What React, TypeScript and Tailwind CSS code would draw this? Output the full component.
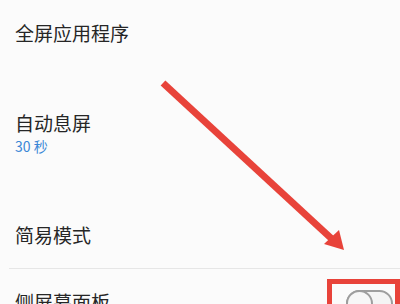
import React from "react";

export default function App() {
  return (
    <div
      className="relative w-[400px] h-[304px] overflow-hidden bg-[#fbfbfb]"
      style={{ fontFamily: '"Noto Sans CJK SC", "Noto Sans", sans-serif' }}
    >
      <div className="flex flex-col">
        <div className="h-[66px] flex items-center pl-[15px]">
          <span className="text-[19px] leading-[24px] text-[#262626]">全屏应用程序</span>
        </div>
        <div className="flex flex-col pl-[15px] pt-[45px]">
          <span className="text-[19px] leading-[24px] text-[#262626]">自动息屏</span>
          <span className="mt-[3px] text-[14px] leading-[17px] text-[#3a87d6]">30 秒</span>
        </div>
        <div className="pl-[15px] pt-[68px] pb-[20px]">
          <span className="text-[19px] leading-[24px] text-[#262626]">简易模式</span>
        </div>
        <div className="ml-[9px] h-px bg-[#e6e6e6]" />
        <div className="flex items-start justify-between pl-[15px] pr-[7px] pt-[21px]">
          <span className="text-[19px] leading-[24px] text-[#262626] whitespace-nowrap">侧屏幕面板</span>
          <div className="relative w-[47px] h-[27px] rounded-full border-2 border-[#9e9e9e] bg-[#f4f4f4]">
            <div className="absolute left-[-2px] top-[-2px] w-[27px] h-[27px] rounded-full border-2 border-[#9e9e9e] bg-[#f7f7f7]" />
          </div>
        </div>
      </div>

      <div className="absolute left-[327px] top-[279px] w-[73px] h-[40px] border-[5px] border-[#e8433a]" />

      <svg className="absolute left-0 top-0" width="400" height="304" viewBox="0 0 400 304">
        <line x1="163" y1="83" x2="333" y2="240" stroke="#e8433a" strokeWidth="7" />
        <polygon points="324,244 339,230 344,250" fill="#e8433a" />
      </svg>
    </div>
  );
}
